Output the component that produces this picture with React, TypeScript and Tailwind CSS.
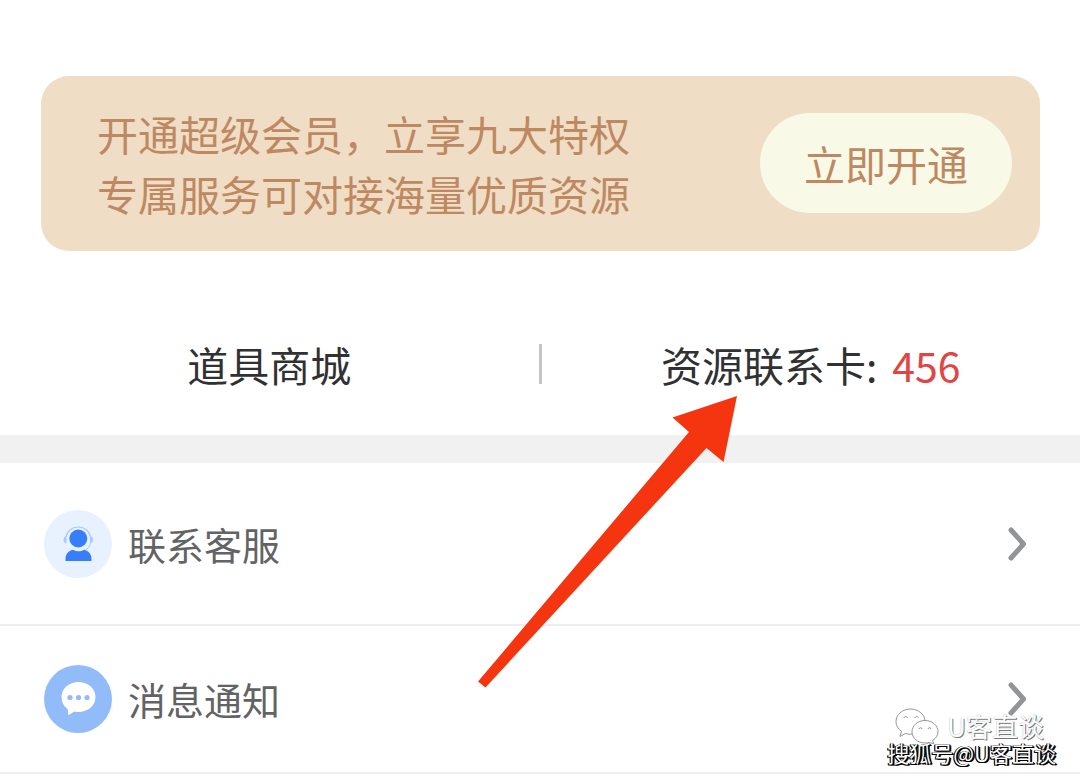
import type { ReactNode } from "react";

function Chevron() {
  return (
    <svg className="h-9 w-6" viewBox="0 0 24 36" fill="none" aria-hidden="true">
      <path d="M5 4 17.5 18 5 32" stroke="#929496" strokeWidth="5" strokeLinecap="round" strokeLinejoin="round" />
    </svg>
  );
}

function ServiceIcon() {
  return (
    <svg className="size-17 shrink-0" viewBox="0 0 68 68" fill="none" aria-hidden="true">
      <circle cx="34" cy="34" r="34" fill="#e8f1fe" />
      <path d="M22 27c1-6 6-10 12.300-10S45.500 21 46.500 27" stroke="#a9c8fb" strokeWidth="1.200" />
      <path d="M22.500 26c-4 .8-4 6.500 0 7.500zM46 26c4 .8 4 6.500 0 7.500z" fill="#a9c8fb" />
      <path d="M46.500 33c-.5 3.500-2.500 5.500-5 7" stroke="#a9c8fb" strokeWidth="1" />
      <circle cx="34.300" cy="28.500" r="9" fill="#387ef8" />
      <path d="M22 51c-.4 0-.5-.3-.5-.6v-1.500c0-4.500 2.700-8.200 7.500-9.200 3.500 2 7.500 2 11 0 4.800 1 7.500 4.700 7.500 9.200v1.500c0 .3-.1.600-.5.600z" fill="#387ef8" />
    </svg>
  );
}

function MessageIcon() {
  return (
    <svg className="size-17 shrink-0" viewBox="0 0 68 68" fill="none" aria-hidden="true">
      <circle cx="34" cy="34" r="34" fill="#92bbfa" />
      <path d="M34.500 17c9.500 0 17 6.500 17 15s-7.500 15-17 15c-1.500 0-3 0-4.500-.5-1.500 1.500-3.500 2.500-6 3.500.3-2 .2-4-.5-6-4-3-6-7-6-12 0-8.500 7.500-15 17-15z" fill="#fff" />
      <circle cx="26" cy="32.500" r="2.600" fill="#92bbfa" />
      <circle cx="34.500" cy="32.500" r="2.600" fill="#92bbfa" />
      <circle cx="43" cy="32.500" r="2.600" fill="#92bbfa" />
    </svg>
  );
}

function MenuRow({ icon, label, height }: { icon: ReactNode; label: string; height: string }) {
  return (
    <li className="border-b-2 border-[#eeeef0]">
      <a href="#" className={`flex items-center gap-4 pr-[50px] pl-11 ${height}`}>
        {icon}
        <span className="flex-1 text-[38px] leading-[56px] text-[#626365]">{label}</span>
        <Chevron />
      </a>
    </li>
  );
}

function WeChatMark() {
  return (
    <svg className="h-9 w-11" viewBox="0 0 44 36" fill="#fff" stroke="#8a8a8a" strokeWidth="0.900" aria-hidden="true">
      <path d="M15.500 1C7.500 1 1 6.500 1 13.500c0 4 2 7.500 5.500 9.800L5 28.500l5.500-3c1.600.5 3.300.7 5 .7 8 0 14.500-5.500 14.500-12.600S23.500 1 15.500 1z" />
      <path d="M30 12.500c-7.200 0-13 5-13 11.300S22.800 35 30 35c1.500 0 3-.2 4.300-.6l4.500 1.400-1.200-3.300c3.300-2 5.400-5.100 5.400-8.700 0-6.300-5.800-11.300-13-11.300z" />
      <path d="M9 10c.5-2 3-2 3.500 0M20 10c.5-2 3-2 3.500 0M24 21c.5-1.800 2.500-1.800 3 0M33 21c.5-1.800 2.500-1.800 3 0" fill="none" />
    </svg>
  );
}

export default function App() {
  return (
    <main className="relative min-h-screen overflow-hidden bg-white pt-19 font-['Noto_Sans_CJK_SC',sans-serif]">
      <section className="mr-10 ml-[41px] flex items-center justify-between rounded-[28px] bg-[#efddc6] pt-[27px] pb-7 pr-7 pl-14">
        <p className="text-[41px] leading-[60px] text-[#be8961]">
          开通超级会员，立享九大特权
          <br />
          专属服务可对接海量优质资源
        </p>
        <button type="button" className="rounded-full bg-[#f9f9e8] px-11 py-5 text-[41px] leading-[60px] text-[#be8961]">
          立即开通
        </button>
      </section>

      <nav className="flex items-center pt-[83px] pb-[41px] text-[41px] leading-[60px] text-[#303133]">
        <a href="#" className="flex-1 text-center">道具商城</a>
        <span className="h-10 w-[3px] bg-[#c4c4c6]" />
        <a href="#" className="flex flex-1 justify-center gap-[15px]">
          <span>资源联系卡:</span>
          <span className="text-[#df4543]">456</span>
        </a>
      </nav>

      <div className="h-7 bg-[#f1f1f1]" />

      <ul>
        <MenuRow icon={<ServiceIcon />} label="联系客服" height="h-[161px]" />
        <MenuRow icon={<MessageIcon />} label="消息通知" height="h-[146px]" />
      </ul>

      <svg className="pointer-events-none absolute top-[395px] left-[478px] h-[293px] w-[260px]" viewBox="0 0 260 293" aria-hidden="true">
        <path d="M259 1 194.500 22.500 211 37 0 286.500 7.500 292.500 228.500 53 245.500 67z" fill="#f5350f" />
      </svg>

      <div className="pointer-events-none absolute right-6 bottom-[14px] flex flex-col items-end">
        <div className="-mb-0.5 flex items-center gap-2 pr-3">
          <WeChatMark />
          <span className="text-[26px] leading-7 text-white [text-shadow:1px_1px_0_#777,0_0_1px_#999]">U客直谈</span>
        </div>
        <span className="text-[22px] leading-5 text-white [text-shadow:-1px_0_0_#000,1px_0_0_#000,1px_1px_0_#000,-1px_1px_0_#000,2px_1px_0_#000]">搜狐号@U客直谈</span>
      </div>
    </main>
  );
}
